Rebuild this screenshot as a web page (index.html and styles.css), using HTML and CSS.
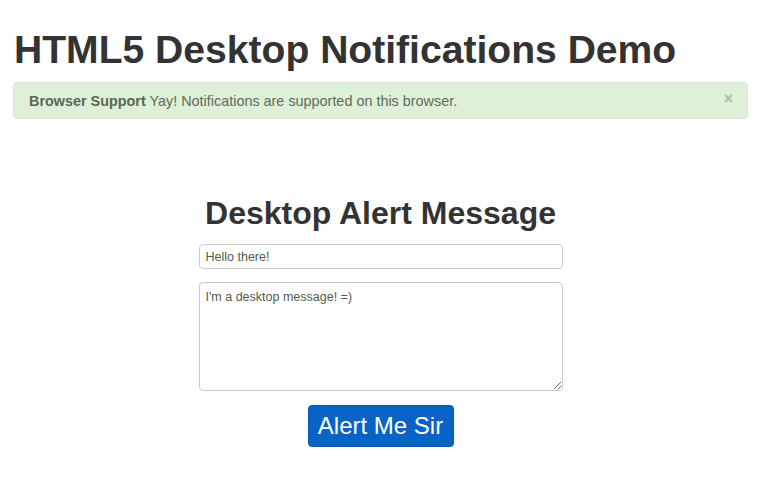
FILE: index.html
```html
<!DOCTYPE html>
<html>
<head>
<meta charset="utf-8">
<link rel="stylesheet" href="styles.css">
</head>
<body>
<div class="container">
  <h1 class="title">HTML5 Desktop Notifications Demo</h1>
  <div class="alert">
    <span><strong>Browser Support</strong> Yay! Notifications are supported on this browser.</span>
    <span class="close">×</span>
  </div>
  <div class="form">
    <h2 class="subtitle">Desktop Alert Message</h2>
    <input class="field" type="text" value="Hello there!">
    <textarea class="area">I'm a desktop message! =)</textarea>
    <button class="btn">Alert Me Sir</button>
  </div>
</div>
</body>
</html>
```
FILE: styles.css
```css
html, body { margin: 0; padding: 0; background: #fff; }
body { font-family: "Liberation Sans", Arial, sans-serif; color: #333; }
.container { padding: 0 18px 0 13px; }
.title {
  margin: 0;
  padding-top: 28px;
  font-size: 39.1px;
  line-height: 44px;
  font-weight: bold;
  color: #333;
  padding-left: 1px;
}
.alert {
  margin-top: 10px;
  height: 35px;
  background: #dff0d8;
  border: 1px solid #d6e9c6;
  border-radius: 4px;
  display: flex;
  align-items: center;
  justify-content: space-between;
  padding: 0 14px 0 15px;
  font-size: 14.4px;
  color: #5f6b5a;
}
.alert strong { color: #5a6656; }
.close { font-size: 16px; color: #b0b8ad; font-weight: bold; margin-top: -4px; }
.form {
  width: 364px;
  margin: 0 auto;
  display: flex;
  flex-direction: column;
  align-items: center;
}
.subtitle {
  margin: 76px 0 0 0;
  font-size: 32px;
  line-height: 36px;
  font-weight: bold;
  color: #333;
}
.field, .area {
  box-sizing: border-box;
  width: 364px;
  border: 1px solid #c6cec4;
  border-radius: 4px;
  font-family: "Liberation Sans", Arial, sans-serif;
  font-size: 12.5px;
  color: #4f5e4c;
  padding: 0 6px;
  background: #fff;
  outline: none;
}
.field { height: 25px; margin-top: 13px; }
.area { height: 109px; margin-top: 13px; padding-top: 7px; resize: vertical; }
.btn {
  margin-top: 14px;
  width: 146px;
  height: 42px;
  border: 1px solid #0a55ad;
  border-radius: 4px;
  background: #0863c7;
  color: #fff;
  font-family: "Liberation Sans", Arial, sans-serif;
  font-size: 24px;
  padding: 0;
}
```
